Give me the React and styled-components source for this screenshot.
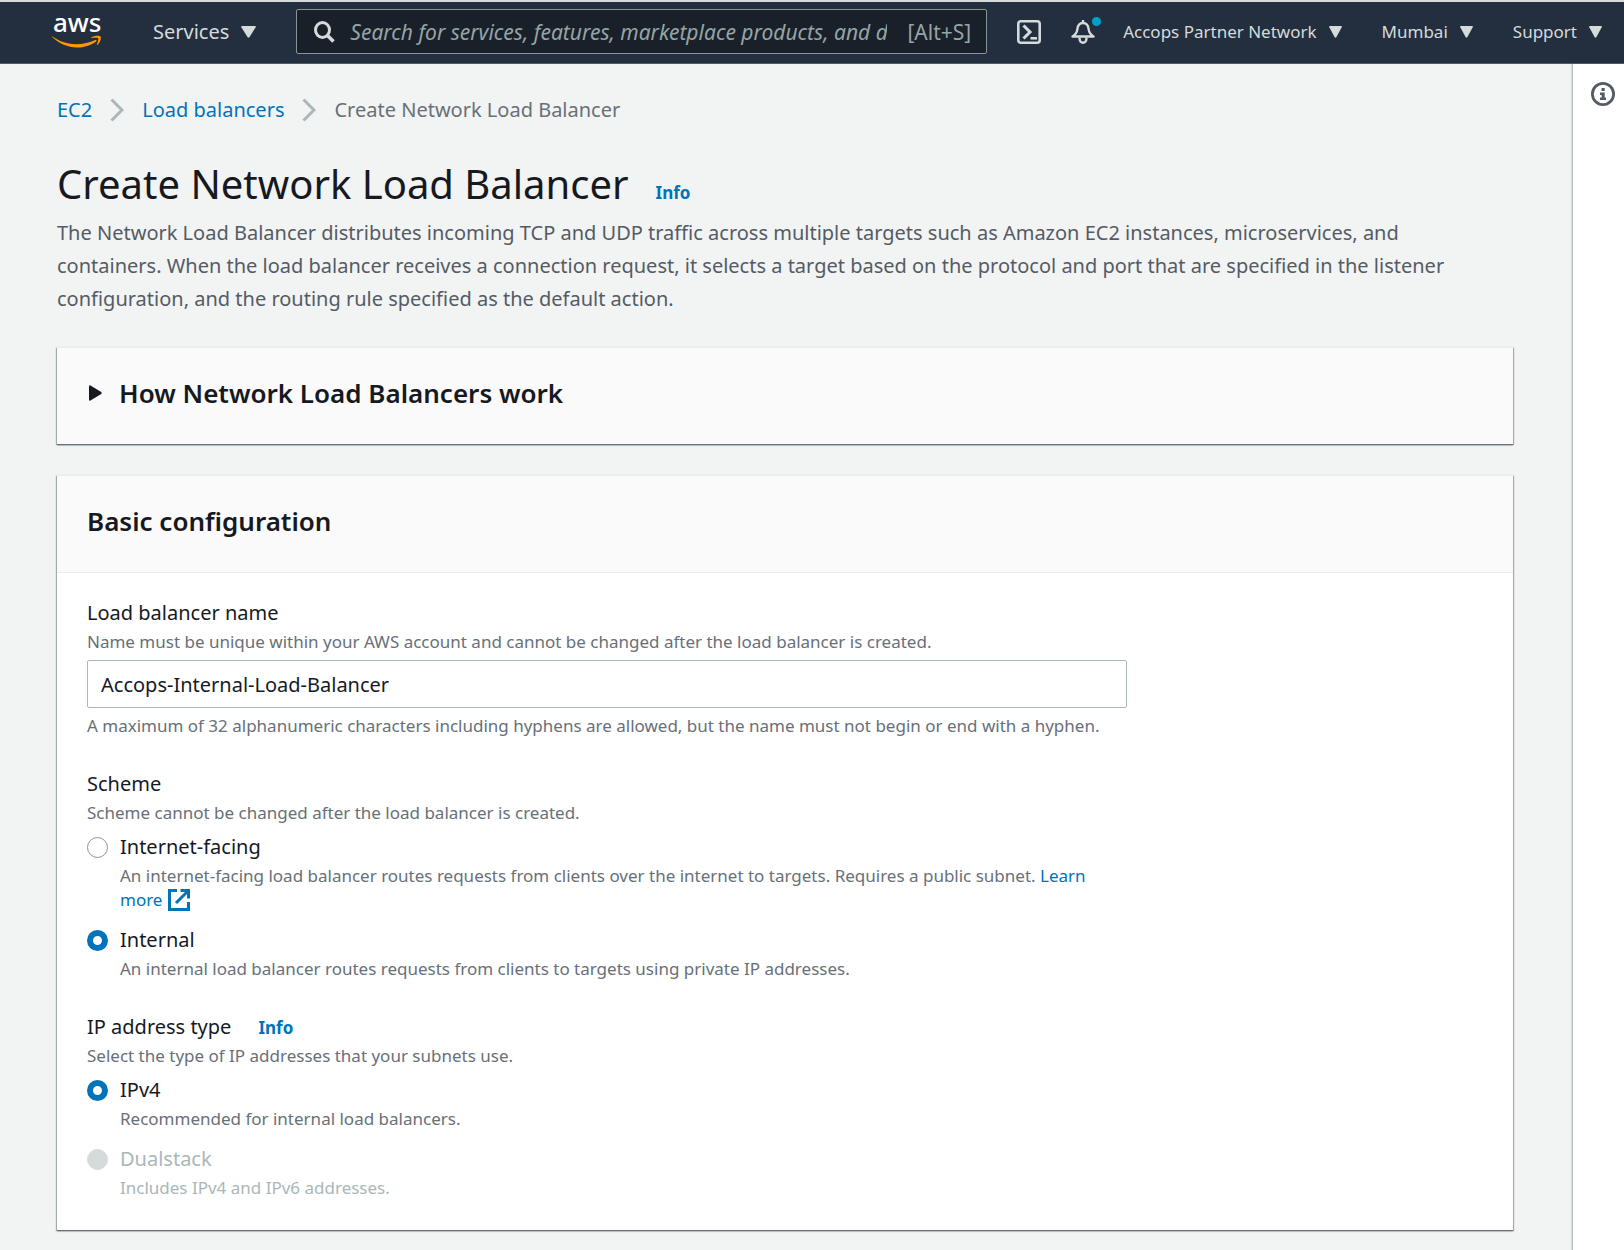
import React, { Fragment, useState } from "react";
import styled, { createGlobalStyle, css } from "styled-components";

const GlobalStyle = createGlobalStyle`
  * {
    box-sizing: border-box;
  }
  body {
    margin: 0;
    background-color: #f2f3f3;
    color: #16191f;
    font-family: "Noto Sans", "Open Sans", sans-serif;
    font-size: 20px;
    line-height: 30px;
  }
  button,
  input {
    font: inherit;
    color: inherit;
  }
`;

const TopBar = styled.header`
  display: flex;
  align-items: center;
  height: 64px;
  padding: 0 22px 2px 52px;
  border-top: 2px solid #d5dbdb;
  border-bottom: 1px solid #545b64;
  background-color: #232f3e;
  color: #d5dbdb;
`;

const Logo = styled.a`
  display: flex;
  margin-right: 51px;
`;

const NavButton = styled.button`
  display: flex;
  align-items: center;
  gap: 12px;
  padding: 0;
  border: 0;
  background: none;
  font-size: ${props => (props.$large ? "20px" : "17px")};
  white-space: nowrap;
  cursor: pointer;
`;

const IconButton = styled.button`
  position: relative;
  display: flex;
  padding: 0;
  border: 0;
  background: none;
  cursor: pointer;
`;

const Dot = styled.span`
  position: absolute;
  top: -3px;
  right: -6px;
  width: 9px;
  height: 9px;
  border-radius: 50%;
  background-color: #00a1c9;
`;

const SearchBox = styled.form`
  display: flex;
  flex: 1;
  align-items: center;
  height: 45px;
  min-width: 0;
  margin: 0 30px 0 40px;
  padding: 0 15px 0 17px;
  border: 1px solid #879596;
  border-radius: 2px;
  background-color: #1a2029;
  font-size: 21px;
`;

const SearchInput = styled.input`
  flex: 1;
  min-width: 0;
  margin: 0 20px 0 15px;
  padding: 0;
  border: 0;
  outline: none;
  background: none;
  &::placeholder {
    color: #95a5a6;
    font-style: italic;
    opacity: 1;
  }
`;

const Shortcut = styled.span`
  color: #95a5a6;
`;

const IconGroup = styled.div`
  display: flex;
  gap: 30px;
  margin-right: 28px;
`;

const NavGroup = styled.nav`
  display: flex;
  gap: 40px;
`;

const Body = styled.div`
  display: flex;
  min-height: calc(100vh - 64px);
`;

const Main = styled.main`
  flex: 1;
  min-width: 0;
  padding: 31px 59px 18px 57px;
`;

const HelpPanel = styled.aside`
  display: flex;
  flex: none;
  justify-content: center;
  align-items: flex-start;
  width: 52px;
  padding: 18px 0 0 8px;
  border-left: 1px solid #b8c0c2;
  box-shadow: -1px 0 1px rgba(0, 28, 36, 0.1);
  background-color: white;
  color: #545b64;
`;

const Breadcrumbs = styled.nav`
  display: flex;
  align-items: center;
  gap: 18px;
  color: #687078;
`;

const Link = styled.a`
  color: #0073bb;
  text-decoration: none;
`;

const InfoLink = styled(Link)`
  margin-left: 27px;
  font-size: 17px;
  font-weight: 700;
  line-height: 1;
`;

const Title = styled.h1`
  margin: 36px 0 9px;
  font-size: 40px;
  font-weight: 400;
  line-height: 46px;
`;

const Description = styled.p`
  margin: 0 0 32px;
  padding-right: 30px;
  color: #545b64;
  line-height: 33px;
`;

const Card = styled.section`
  margin-bottom: 31px;
  background-color: white;
  border-top: 1px solid #eaeded;
  box-shadow: 0 1px 1px #687078, 0 1px 2px rgba(0, 28, 36, 0.3),
    1px 1px 1px rgba(0, 28, 36, 0.2), -1px 1px 1px rgba(0, 28, 36, 0.2);
  &:last-child {
    margin-bottom: 0;
  }
`;

const CardHeader = styled.div`
  padding: 27px 30px 33px;
  background-color: #fafafa;
  border-bottom: ${props => (props.$divided ? "1px solid #eaeded" : "0")};
`;

const CardTitle = styled.h2`
  margin: 0;
  font-size: 26px;
  font-weight: 600;
  line-height: 36px;
`;

const ExpandButton = styled.button`
  display: flex;
  align-items: center;
  gap: 17px;
  padding: 0 0 0 2px;
  border: 0;
  background: none;
  cursor: pointer;
`;

const CardBody = styled.div`
  display: flex;
  flex-direction: column;
  gap: 31px;
  max-width: 1100px;
  padding: 25px 30px 30px;
`;

const Fieldset = styled.fieldset`
  min-width: 0;
  margin: 0;
  padding: 0;
  border: 0;
`;

const labelStyle = css`
  display: block;
  margin-bottom: 2px;
  padding: 0;
`;

const Label = styled.label`
  ${labelStyle}
`;

const Legend = styled.legend`
  ${labelStyle}
`;

const Hint = styled.p`
  margin: 0;
  color: ${props => (props.$disabled ? "#aab7b8" : "#687078")};
  font-size: 17px;
  line-height: 24px;
`;

const TextInput = styled.input`
  display: block;
  width: 100%;
  height: 48px;
  margin: 6px 0;
  padding: 0 13px;
  border: 1px solid #aab7b8;
  border-radius: 2px;
  background-color: white;
`;

const Options = styled.div`
  display: flex;
  flex-direction: column;
  gap: 13px;
  margin-top: 7px;
`;

const Option = styled.div`
  display: grid;
  grid-template-columns: 21px 1fr;
  column-gap: 12px;
`;

const Radio = styled.input`
  appearance: none;
  width: 21px;
  height: 21px;
  margin: 5px 0 0;
  border: 1px solid #879596;
  border-radius: 50%;
  background-color: white;
  &:checked {
    border: 6px solid #0073bb;
  }
  &:disabled {
    border-color: #d5dbdb;
    background-color: #d5dbdb;
  }
`;

const OptionLabel = styled(Label)`
  color: ${props => (props.$disabled ? "#aab7b8" : "inherit")};
`;

const OptionHint = styled(Hint)`
  grid-column: 2;
`;

const NoWrap = styled.span`
  white-space: nowrap;
  svg {
    margin-left: 6px;
    vertical-align: -5px;
  }
`;

const Caret = ({ width = 13 }) => (
  <svg width={width} height="12" viewBox="0 0 14 12" preserveAspectRatio="none">
    <path d="M1 0h12q1.300 0 .7 1.200L8 11q-1 1.500-2 0L.3 1.200Q-.3 0 1 0z" fill="currentColor" />
  </svg>
);

const AwsLogo = () => (
  <svg width="50" height="56" viewBox="0 0 50 56" aria-label="AWS">
    <text x="1" y="28" fill="white" fontSize="26" fontWeight="500" fontFamily="Noto Sans">
      aws
    </text>
    <g transform="translate(0 12)" fill="#ff9900">
      <path d="M.4 20.600c7 5 15.600 7.700 24 7.700 6.400 0 13.300-1.500 19-4.200.9-.4 1.700.6.8 1.300C39.400 29 32 31.500 25.200 31.500 15.700 31.500 7 27.500.600 21.600c-.5-.5-.7-1.400-.2-1z" />
      <path d="M39.200 21.400c2.500-1.800 8.200-2.300 9.300-1 1 1.300-.4 6.300-2.900 8.300-.5.400-.9.200-.7-.3.800-1.900 1.900-5.200 1.400-6-.6-.8-4.300-.6-6.600-.4-.7.100-.9-.3-.5-.6z" />
    </g>
  </svg>
);

const SearchIcon = () => (
  <svg width="21" height="22" viewBox="0 0 21 22" fill="none" stroke="#d5dbdb">
    <ellipse cx="8.500" cy="9" rx="7" ry="7.500" strokeWidth="3" />
    <path d="M13 14l6.500 6.500" strokeWidth="3.500" />
  </svg>
);

const ShellIcon = () => (
  <svg width="24" height="24" viewBox="0 0 24 24" fill="none" stroke="#d5dbdb" strokeWidth="2.600">
    <rect x="1.300" y="1.300" width="21.400" height="21.400" rx="2.500" />
    <path d="M6.500 5.500l6.500 6.500-6.500 6.500" strokeWidth="3" />
    <path d="M13.500 18.300h6.500" />
  </svg>
);

const BellIcon = () => (
  <svg width="24" height="24" viewBox="0 0 24 24" fill="none" stroke="#d5dbdb" strokeWidth="2.400">
    <path d="M12 0v3" />
    <path d="M1.500 16.500c3-2 4.500-4 4.800-7C6.700 5.300 8.800 3 12 3s5.300 2.300 5.700 6.500c.3 3 1.800 5 4.800 7z" strokeLinejoin="round" />
    <path d="M8.600 17.500v1.500a3.400 3.700 0 0 0 6.800 0v-1.500" />
  </svg>
);

const InfoIcon = () => (
  <svg width="24" height="24" viewBox="0 0 24 24">
    <circle cx="12" cy="12" r="10.600" fill="none" stroke="currentColor" strokeWidth="2.800" />
    <path d="M10.500 6h3.200v3h-3.200zM9 10.500h4.700v5H15V18H9v-2.500h1.700V13H9z" fill="currentColor" />
  </svg>
);

const ChevronIcon = () => (
  <svg width="14" height="24" viewBox="0 0 14 24" fill="none" stroke="#aab7b8" strokeWidth="3">
    <path d="M1.500 1.500L12 12 1.500 22.500" />
  </svg>
);

const ExpandIcon = () => (
  <svg width="13" height="16" viewBox="0 0 13 16">
    <path d="M0 1.500Q0 0 1.500.4L12.200 7q1 1 0 2L1.500 15.600Q0 16 0 14.500z" fill="currentColor" />
  </svg>
);

const ExternalIcon = () => (
  <svg width="22" height="22" viewBox="0 0 22 22" fill="none" stroke="currentColor" strokeWidth="3">
    <path d="M9 1.500H1.500v19h19V13" />
    <path d="M12.500 1.500h8v8M20 2L8 14" />
  </svg>
);

const RadioOption = ({ name, value, label, selected, onSelect, disabled, children }) => (
  <Option>
    <Radio
      type="radio"
      id={value}
      name={name}
      value={value}
      checked={selected === value}
      disabled={disabled}
      onChange={() => onSelect(value)}
    />
    <OptionLabel htmlFor={value} $disabled={disabled}>
      {label}
    </OptionLabel>
    <OptionHint $disabled={disabled}>{children}</OptionHint>
  </Option>
);

const Navigation = () => (
  <TopBar>
    <Logo href="#">
      <AwsLogo />
    </Logo>
    <NavButton $large>
      Services <Caret width={15} />
    </NavButton>
    <SearchBox role="search">
      <SearchIcon />
      <SearchInput
        type="text"
        aria-label="Search"
        placeholder="Search for services, features, marketplace products, and docs"
      />
      <Shortcut>[Alt+S]</Shortcut>
    </SearchBox>
    <IconGroup>
      <IconButton aria-label="CloudShell">
        <ShellIcon />
      </IconButton>
      <IconButton aria-label="Notifications">
        <BellIcon />
        <Dot />
      </IconButton>
    </IconGroup>
    <NavGroup>
      {["Accops Partner Network", "Mumbai", "Support"].map(item => (
        <NavButton key={item}>
          {item} <Caret />
        </NavButton>
      ))}
    </NavGroup>
  </TopBar>
);

const App = () => {
  const [name, setName] = useState("Accops-Internal-Load-Balancer");
  const [scheme, setScheme] = useState("internal");
  const [ipType, setIpType] = useState("ipv4");

  return (
    <Fragment>
      <GlobalStyle />
      <Navigation />
      <Body>
        <Main>
          <Breadcrumbs aria-label="Breadcrumbs">
            <Link href="#">EC2</Link>
            <ChevronIcon />
            <Link href="#">Load balancers</Link>
            <ChevronIcon />
            <span>Create Network Load Balancer</span>
          </Breadcrumbs>
          <Title>
            Create Network Load Balancer
            <InfoLink href="#">Info</InfoLink>
          </Title>
          <Description>
            The Network Load Balancer distributes incoming TCP and UDP traffic across multiple
            targets such as Amazon EC2 instances, microservices, and containers. When the load
            balancer receives a connection request, it selects a target based on the protocol and
            port that are specified in the listener configuration, and the routing rule specified as
            the default action.
          </Description>
          <Card>
            <CardHeader>
              <CardTitle>
                <ExpandButton aria-expanded="false">
                  <ExpandIcon />
                  How Network Load Balancers work
                </ExpandButton>
              </CardTitle>
            </CardHeader>
          </Card>
          <Card>
            <CardHeader $divided>
              <CardTitle>Basic configuration</CardTitle>
            </CardHeader>
            <CardBody>
              <div>
                <Label htmlFor="name">Load balancer name</Label>
                <Hint>
                  Name must be unique within your AWS account and cannot be changed after the load
                  balancer is created.
                </Hint>
                <TextInput
                  type="text"
                  id="name"
                  value={name}
                  onChange={e => setName(e.target.value)}
                />
                <Hint>
                  A maximum of 32 alphanumeric characters including hyphens are allowed, but the
                  name must not begin or end with a hyphen.
                </Hint>
              </div>
              <Fieldset>
                <Legend>Scheme</Legend>
                <Hint>Scheme cannot be changed after the load balancer is created.</Hint>
                <Options>
                  <RadioOption
                    name="scheme"
                    value="internet-facing"
                    label="Internet-facing"
                    selected={scheme}
                    onSelect={setScheme}
                  >
                    An internet-facing load balancer routes requests from clients over the internet
                    to targets. Requires a public subnet.{" "}
                    <Link href="#">
                      Learn{" "}
                      <NoWrap>
                        more
                        <ExternalIcon />
                      </NoWrap>
                    </Link>
                  </RadioOption>
                  <RadioOption
                    name="scheme"
                    value="internal"
                    label="Internal"
                    selected={scheme}
                    onSelect={setScheme}
                  >
                    An internal load balancer routes requests from clients to targets using private
                    IP addresses.
                  </RadioOption>
                </Options>
              </Fieldset>
              <Fieldset>
                <Legend>
                  IP address type
                  <InfoLink href="#">Info</InfoLink>
                </Legend>
                <Hint>Select the type of IP addresses that your subnets use.</Hint>
                <Options>
                  <RadioOption
                    name="ip-type"
                    value="ipv4"
                    label="IPv4"
                    selected={ipType}
                    onSelect={setIpType}
                  >
                    Recommended for internal load balancers.
                  </RadioOption>
                  <RadioOption
                    name="ip-type"
                    value="dualstack"
                    label="Dualstack"
                    selected={ipType}
                    onSelect={setIpType}
                    disabled
                  >
                    Includes IPv4 and IPv6 addresses.
                  </RadioOption>
                </Options>
              </Fieldset>
            </CardBody>
          </Card>
        </Main>
        <HelpPanel>
          <IconButton aria-label="Info">
            <InfoIcon />
          </IconButton>
        </HelpPanel>
      </Body>
    </Fragment>
  );
};

export default App;
